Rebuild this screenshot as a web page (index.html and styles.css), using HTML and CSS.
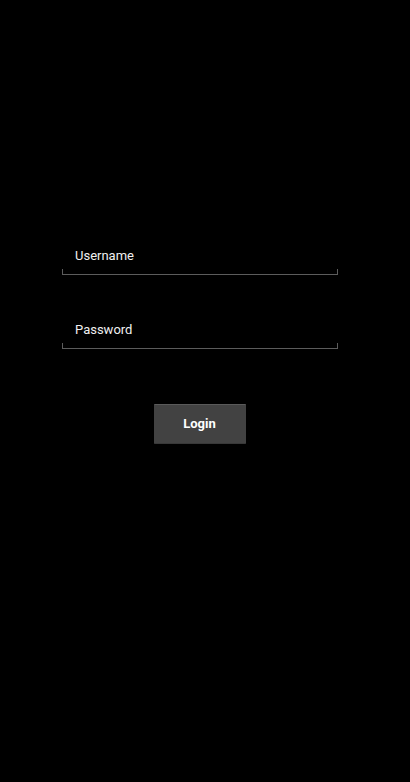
FILE: index.html
```html
<!DOCTYPE html>
<html>
<head>
<meta charset="utf-8">
<link rel="stylesheet" href="styles.css">
</head>
<body>
<main class="screen">
  <form class="login-form">
    <div class="field">
      <span class="field-label">Username</span>
      <div class="field-line"></div>
    </div>
    <div class="field">
      <span class="field-label">Password</span>
      <div class="field-line"></div>
    </div>
    <div class="actions">
      <button type="button" class="login-btn">Login</button>
    </div>
  </form>
</main>
</body>
</html>
```
FILE: styles.css
```css
html, body {
  margin: 0;
  padding: 0;
  background: #000;
  height: 100%;
}
.screen {
  height: 782px;
  background: #000;
  font-family: Roboto, "Noto Sans", sans-serif;
  color: #f2f2f2;
}
.login-form {
  padding-top: 248px;
  padding-left: 62px;
  width: 276px;
  display: flex;
  flex-direction: column;
}
.field {
  display: flex;
  flex-direction: column;
  margin-bottom: 47px;
}
.field-label {
  display: block;
  font-size: 13px;
  line-height: 16px;
  height: 16px;
  padding-left: 13px;
  color: #f0f0f0;
}
.field-line {
  margin-top: 5px;
  height: 5px;
  border-left: 1px solid #5c5c5c;
  border-right: 1px solid #5c5c5c;
  border-bottom: 1px solid #5c5c5c;
}
.actions {
  display: flex;
  justify-content: center;
  margin-top: 8px;
  padding-right: 1px;
}
.login-btn {
  width: 92px;
  height: 40px;
  background: #424242;
  border: none;
  border-top: 1px solid #5a5a5a;
  border-bottom: 1px solid #383838;
  border-radius: 1px;
  color: #fff;
  font-family: Roboto, "Noto Sans", sans-serif;
  font-weight: bold;
  font-size: 13px;
  padding: 0 0 2px 0;
}
```
